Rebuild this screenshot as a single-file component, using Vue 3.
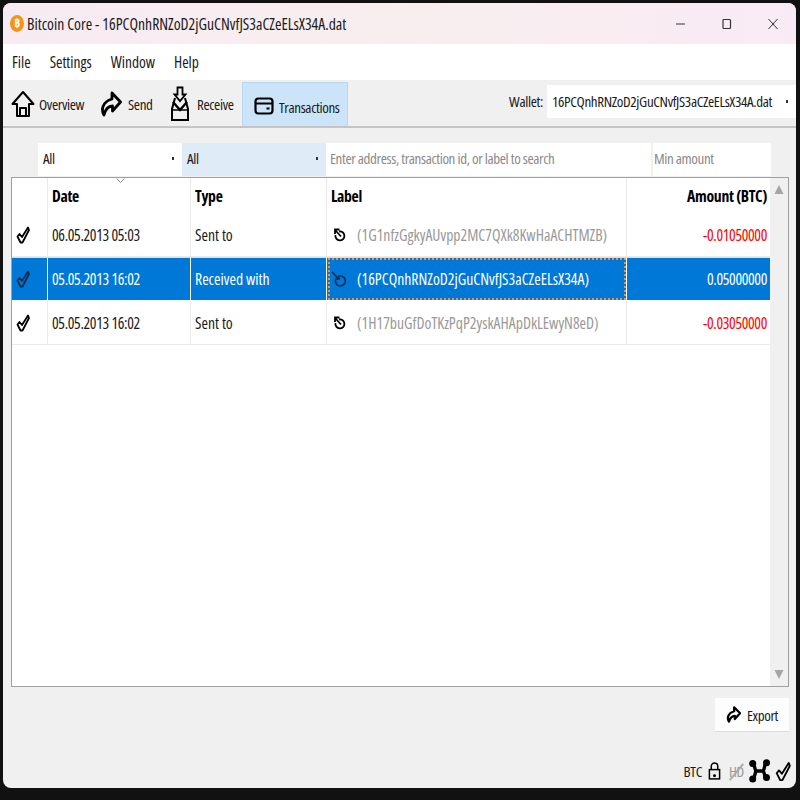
<script setup>
const rows = [
  { date: '06.05.2013 05:03', type: 'Sent to', label: '(1G1nfzGgkyAUvpp2MC7QXk8KwHaACHTMZB)', amount: '-0.01050000', sel: false, recv: false },
  { date: '05.05.2013 16:02', type: 'Received with', label: '(16PCQnhRNZoD2jGuCNvfJS3aCZeELsX34A)', amount: '0.05000000', sel: true, recv: true },
  { date: '05.05.2013 16:02', type: 'Sent to', label: '(1H17buGfDoTKzPqP2yskAHApDkLEwyN8eD)', amount: '-0.03050000', sel: false, recv: false }
]
const menus = ['File', 'Settings', 'Window', 'Help']
</script>

<template>
  <div class="screen">
    <div class="window">
      <header class="titlebar">
        <div class="logo">₿</div>
        <div class="title">Bitcoin Core - 16PCQnhRNZoD2jGuCNvfJS3aCZeELsX34A.dat</div>
        <div class="winbtns">
          <svg width="14" height="14" viewBox="0 0 14 14"><path d="M2 7h9" stroke="#333" stroke-width="1.2" fill="none"/></svg>
          <svg width="14" height="14" viewBox="0 0 14 14"><rect x="3" y="2.5" width="7.5" height="9" rx="1" stroke="#333" stroke-width="1.2" fill="none"/></svg>
          <svg width="14" height="14" viewBox="0 0 14 14"><path d="M2.5 2l9 10M11.5 2l-9 10" stroke="#333" stroke-width="1" fill="none"/></svg>
        </div>
      </header>
      <nav class="menubar">
        <span v-for="m in menus" :key="m" class="menu">{{ m }}</span>
      </nav>
      <div class="toolbar">
        <div class="tool t-over">
          <svg width="24" height="30" viewBox="0 0 24 30" fill="none" stroke="#000" stroke-width="2" stroke-linejoin="round"><path d="M1.500 15 12 3l10.500 12h-4.500v12H6V15z"/><path d="M9 27v-8h6v8"/></svg>
          <span>Overview</span>
        </div>
        <div class="tool t-send">
          <svg width="22" height="30" viewBox="0 0 22 30" fill="none" stroke="#000" stroke-width="2.800" stroke-linejoin="round"><path d="M12 4l8.500 9-8 9v-5c-4 0-7 3-8.500 9-3-5-2-13 8-16z"/></svg>
          <span>Send</span>
        </div>
        <div class="tool t-recv">
          <svg width="20" height="36" viewBox="0 0 20 36" fill="none" stroke="#000" stroke-width="2"><path d="M7.500 1.500h5v7h3l-5.500 6.500L4.500 8.500h3z" stroke-width="1.800"/><path d="M5 12 2 23v11h16V23l-3-11"/><path d="M3 16l7 8 7-8" stroke-width="2.400"/><path d="M2 24h16" stroke-width="1.600"/></svg>
          <span>Receive</span>
        </div>
        <div class="tool t-tx active">
          <svg width="20" height="18" viewBox="0 0 20 18" fill="none" stroke="#000" stroke-width="2.200"><rect x="1.500" y="1.500" width="17" height="15" rx="3"/><path d="M2 6.500h16"/><path d="M12.500 11.500h3" stroke-width="1.800"/></svg>
          <span>Transactions</span>
        </div>
        <div class="wallet">
          <span class="wallet-label">Wallet:</span>
          <div class="wallet-combo">
            <span>16PCQnhRNZoD2jGuCNvfJS3aCZeELsX34A.dat</span>
            <i class="dot"></i>
          </div>
        </div>
      </div>
      <main class="content">
        <div class="filters">
          <div class="combo"><span>All</span><i class="dot"></i></div>
          <div class="combo focus"><span>All</span><i class="dot"></i></div>
          <div class="field search">Enter address, transaction id, or label to search</div>
          <div class="field min">Min amount</div>
        </div>
        <section class="table">
          <div class="grid">
            <div class="row head">
              <div class="c c0"></div>
              <div class="c c1">Date<svg class="sort" width="9" height="5" viewBox="0 0 9 5"><path d="M.5.5l4 4 4-4" stroke="#888" fill="none"/></svg></div>
              <div class="c c2">Type</div>
              <div class="c c3">Label</div>
              <div class="c c4">Amount (BTC)</div>
            </div>
            <div v-for="r in rows" :key="r.label" class="row" :class="{ sel: r.sel }">
              <div class="c c0">
                <svg width="14" height="18" viewBox="0 0 14 18" fill="none" :stroke="r.sel ? '#0b2d50' : '#000'" stroke-width="1.800" stroke-linejoin="round"><path d="M1.500 10.500 3.500 8l2.500 3L12 1.500l1 2.500-6.500 12.500h-2z"/></svg>
              </div>
              <div class="c c1 num">{{ r.date }}</div>
              <div class="c c2">{{ r.type }}</div>
              <div class="c c3">
                <div class="labelwrap" :class="{ focused: r.sel }">
                  <svg v-if="!r.recv" class="txicon" width="14" height="16" viewBox="0 0 14 16" fill="none" stroke="#000" stroke-width="1.800"><path d="M6 4.500a4.500 4.500 0 1 1-3.500 3.500"/><path d="M8 9.500 2.500 3.500M2 7V2.500h4.500"/></svg>
                  <svg v-else class="txicon" width="16" height="18" viewBox="0 0 16 18" fill="none" stroke="#0b2d50" stroke-width="1.600"><path d="M9 6a5 5 0 1 1-4.500 4"/><path d="M1 2l7 7M8 5v4H4"/></svg>
                  <span class="addr">{{ r.label }}</span>
                </div>
              </div>
              <div class="c c4 num" :class="{ neg: !r.sel }">{{ r.amount }}</div>
            </div>
          </div>
          <div class="scroll">
            <svg width="10" height="9" viewBox="0 0 10 9"><path d="M5 0l4.500 9h-9z" fill="#a5a5a5"/></svg>
            <svg width="10" height="9" viewBox="0 0 10 9"><path d="M5 9 .5 0h9z" fill="#a5a5a5"/></svg>
          </div>
        </section>
        <div class="actions">
          <div class="export">
            <svg width="15" height="17" viewBox="0 0 22 26" fill="none" stroke="#000" stroke-width="3.500" stroke-linejoin="round"><path d="M12 2l9 9-8 9v-5c-4 0-7 3-9 9-3-5-2-13 8-16z"/></svg>
            <span>Export</span>
          </div>
        </div>
        <footer class="status">
          <span class="unit">BTC</span>
          <svg width="13" height="20" viewBox="0 0 14 20" fill="none" stroke="#000" stroke-width="1.600"><rect x="1.500" y="8.500" width="11" height="10"/><path d="M3.500 8.500V5a3.500 3.500 0 0 1 7 0v3.500"/><circle cx="7" cy="15" r=".8" fill="#000"/></svg>
          <span class="hd">HD</span>
          <svg width="21" height="24" viewBox="0 0 21 24" fill="none" stroke="#000" stroke-width="3.400"><path d="M4 5c2 2 2 6 3 7-1 2-1 6-3 8M17 4c-2 2-1 6-3 8 2 2 1 5 3 7M7 12h7"/><circle cx="3.700" cy="4.500" r="3.500" fill="#000" stroke="none"/><circle cx="17.500" cy="3.700" r="3.500" fill="#000" stroke="none"/><circle cx="3.700" cy="20" r="3.500" fill="#000" stroke="none"/><circle cx="17.500" cy="18.500" r="3.500" fill="#000" stroke="none"/></svg>
          <svg width="16" height="21" viewBox="0 0 14 18" fill="none" stroke="#000" stroke-width="1.600" stroke-linejoin="round"><path d="M1.500 10.500 3.500 8l2.500 3L12 1.500l1 2.500-6.500 12.500h-2z"/></svg>
        </footer>
      </main>
    </div>
  </div>
</template>

<style>
html, body { margin: 0; background: #111; }
</style>

<style scoped>
.screen {
  width: 800px;
  height: 800px;
  box-sizing: border-box;
  padding: 3px 4px 12px 3px;
  background: #111;
  font-family: "Open Sans", "Noto Sans", sans-serif;
  font-stretch: 75%;
  font-size: 15.7px;
  color: #1a1a1a;
}
.window {
  height: 100%;
  display: flex;
  flex-direction: column;
  background: #f0f0f0;
  border-radius: 8px;
  overflow: hidden;
}
.titlebar {
  height: 41px;
  flex: none;
  display: flex;
  align-items: center;
  background: linear-gradient(90deg, #f7ebf3 0%, #f8eeee 50%, #f8ebf5 100%);
  padding-left: 7px;
}
.logo {
  width: 14px;
  height: 17px;
  border-radius: 50%;
  background: #f7931a;
  color: #fff;
  font-size: 10px;
  font-weight: 700;
  line-height: 17px;
  text-align: center;
  margin-right: 3px;
}
.title { flex: 1; }
.winbtns { display: flex; gap: 32px; padding-right: 16px; }
.menubar {
  height: 36px;
  flex: none;
  display: flex;
  align-items: center;
  gap: 19px;
  background: #fff;
  padding-left: 9px;
  font-size: 15.5px;
}
.toolbar {
  height: 48px;
  flex: none;
  box-sizing: border-box;
  display: flex;
  align-items: stretch;
  padding-left: 5px;
  border-bottom: 2px solid #c4c4c4;
  font-size: 15px;
  letter-spacing: -0.35px;
}
.tool { display: flex; align-items: center; gap: 6px; padding-top: 2px; box-sizing: border-box; }
.tool svg { flex: none; }
.t-over { width: 84px; padding-left: 3px; gap: 4px; }
.t-send { width: 70px; padding-left: 8px; }
.t-recv { width: 80px; padding-left: 8px; gap: 7px; }
.active {
  width: 106px;
  background: #cce4f7;
  border: 1px solid #b8d8f0;
  border-bottom: 0;
  padding-left: 11px;
  gap: 5px;
  margin-top: 2px;
}
.active span { position: relative; top: 1px; }
.wallet {
  margin-left: auto;
  display: flex;
  align-items: center;
  gap: 4px;
  padding-bottom: 4px;
}
.wallet-combo {
  width: 249px;
  height: 33px;
  background: #fff;
  box-sizing: border-box;
  padding: 0 8px 0 5px;
  display: flex;
  align-items: center;
  justify-content: space-between;
}
.dot {
  width: 2px;
  height: 3px;
  background: #333;
  flex: none;
}
.content {
  flex: 1;
  display: flex;
  flex-direction: column;
  padding: 15px 7px 0 8px;
  min-height: 0;
}
.filters { height: 33px; display: flex; margin-left: 27px; flex: none; font-size: 15px; letter-spacing: -0.37px; }
.combo {
  width: 144px;
  box-sizing: border-box;
  background: #fff;
  display: flex;
  align-items: center;
  justify-content: space-between;
  padding: 0 8px 3px 5px;
}
.combo.focus { background: #dfecf7; }
.field {
  background: #fff;
  display: flex;
  align-items: center;
  color: #8a8a8a;
  box-sizing: border-box;
  padding: 0 0 3px 4px;
}
.search { width: 325px; }
.min { width: 118px; margin-left: 2px; padding-left: 1px; }
.table {
  height: 510px;
  flex: none;
  margin-top: 1px;
  border: 1px solid #a0a0a0;
  background: #fff;
  display: flex;
  box-sizing: border-box;
  width: 778px;
}
.grid { width: 758px; flex: none; }
.row { display: flex; height: 44px; border-bottom: 1px solid #eaeaea; box-sizing: border-box; }
.row.head { height: 35px; border-bottom: 0; font-weight: 700; color: #000; font-size: 15.7px; letter-spacing: -0.3px; }
.c {
  display: flex;
  align-items: center;
  box-sizing: border-box;
  border-right: 1px solid #eaeaea;
  padding-left: 4px;
  position: relative;
  flex: none;
}
.c0 { width: 36px; padding-left: 4px; }
.c1 { width: 143px; }
.c2 { width: 136px; }
.c3 { width: 300px; }
.c4 { width: 143px; justify-content: flex-end; padding: 0 3px 0 0; border-right: 0; }
.num { letter-spacing: -0.35px; }
.neg { color: #ff0000; }
.sort { position: absolute; left: 68px; top: 0; }
.row.sel { background: #0078d7; color: #fff; border-bottom: 1px solid #fff; border-top: 1px solid #cfe4f5; }
.row.sel .c { border-right-color: #fff; }
.row.sel .c3 { padding: 0 0 0 1px; }
.labelwrap { display: flex; align-items: center; width: 100%; height: 100%; box-sizing: border-box; padding-left: 2px; }
.labelwrap.focused { border: 2px dotted #f0923a; padding-left: 1px; }
.txicon { flex: none; margin-right: 10px; }
.addr { color: #999; }
.focused .addr { color: #fff; }
.scroll {
  width: 18px;
  flex: 1;
  background: #f0f0f0;
  display: flex;
  flex-direction: column;
  justify-content: space-between;
  align-items: center;
  padding: 7px 0;
}
.actions { display: flex; justify-content: flex-end; margin-top: 11px; flex: none; font-size: 15px; letter-spacing: -0.35px; }
.export {
  width: 74px;
  height: 34px;
  box-sizing: border-box;
  background: #fdfdfd;
  border-bottom: 1px solid #dcdcdc;
  display: flex;
  align-items: center;
  justify-content: center;
  gap: 6px;
}
.status {
  margin-top: auto;
  height: 34px;
  display: flex;
  align-items: center;
  justify-content: flex-end;
  gap: 5px;
  margin-right: -2px;
  font-size: 15px;
  letter-spacing: -0.3px;
}
.unit { margin-right: 1px; }
.hd {
  color: #999;
  margin: 0 0 0 3px;
  position: relative;
}
.hd::after {
  content: "";
  position: absolute;
  left: -3px;
  right: -3px;
  top: 50%;
  height: 2px;
  background: #aaa;
  transform: rotate(-50deg);
}
</style>
